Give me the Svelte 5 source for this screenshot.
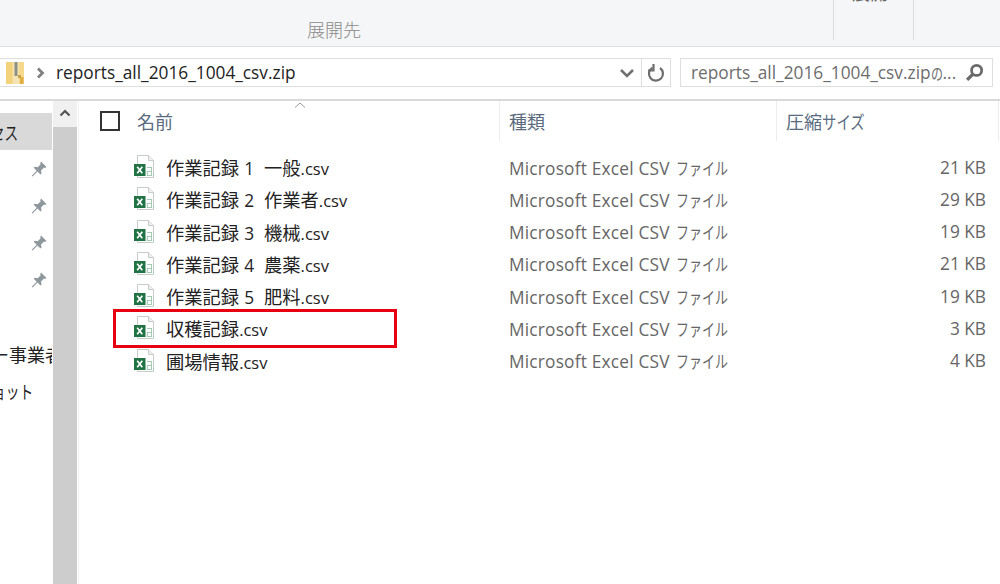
<script>
  const files = [
    { head: '作業記録', num: '1', tail: '一般', size: '21 KB' },
    { head: '作業記録', num: '2', tail: '作業者', size: '29 KB' },
    { head: '作業記録', num: '3', tail: '機械', size: '19 KB' },
    { head: '作業記録', num: '4', tail: '農薬', size: '21 KB' },
    { head: '作業記録', num: '5', tail: '肥料', size: '19 KB' },
    { head: '収穫記録', size: '3 KB' },
    { head: '圃場情報', size: '4 KB' }
  ];
  const pins = [0, 1, 2, 3];
</script>

<div class="window">
  <header class="ribbon">
    <div class="group-label">展開先</div>
    <div class="ribbon-sep first"><span class="clipped">展開</span></div>
    <div class="ribbon-sep second"></div>
  </header>

  <div class="addressbar">
    <div class="address">
      <svg class="zip" width="18" height="22" viewBox="0 0 18 22">
        <rect x="0" y="0" width="18" height="22" fill="#f6d98c" />
        <rect x="0" y="0" width="6" height="22" fill="#f3d27c" />
        <rect x="7" y="0" width="6" height="22" fill="#f4e4b4" />
        <rect x="8.500" y="0" width="3" height="14" fill="#8f8f84" />
        <rect x="14" y="15" width="3.500" height="7" fill="#dfae45" />
        <rect x="12" y="13" width="3" height="3" fill="#c9a24a" />
      </svg>
      <svg class="crumb" width="10" height="12" viewBox="0 0 10 12">
        <path d="M2 1.500 6.500 6 2 10.500" fill="none" stroke="#808080" stroke-width="2.800" />
      </svg>
      <span class="path">reports_all_2016_1004_csv.zip</span>
      <svg class="chev" width="16" height="10" viewBox="0 0 16 10">
        <path d="M2 2 8 8l6-6" fill="none" stroke="#707070" stroke-width="2.600" />
      </svg>
      <div class="refresh">
        <svg width="18" height="20" viewBox="0 0 18 20">
          <path d="M5.500 4.600A7 7 0 1 0 13 5" fill="none" stroke="#6e6e6e" stroke-width="2.200" />
          <path d="M6.500 1v6.500H1" fill="none" stroke="#6e6e6e" stroke-width="2.200" />
        </svg>
      </div>
    </div>
    <div class="search">
      <span class="search-text">reports_all_2016_1004_csv.zip<span class="narrow-no">の</span>...</span>
      <svg width="19" height="19" viewBox="0 0 18 18">
        <circle cx="11" cy="7" r="4.800" fill="none" stroke="#6a6a6a" stroke-width="2.600" />
        <path d="M7.500 10.500 2 16" stroke="#6a6a6a" stroke-width="3.200" />
      </svg>
    </div>
  </div>

  <div class="body">
    <nav class="sidebar">
      <div class="nav-item selected"><span class="squeezed">クイックアクセス</span></div>
      {#each pins as p (p)}
        <div class="pin-row">
          <svg width="16" height="16" viewBox="0 0 16 16">
            <path d="M10 0.500 15.500 6l-1.500 1-1-.5-3 3 .5 3-1 1-3-3-5 5-.8-.8 5-5-3-3 1-1 3 .5 3-3-.5-1z" fill="#8e979b" />
          </svg>
        </div>
      {/each}
      <div class="nav-item one"><span>オーナー事業者</span></div>
      <div class="nav-item two"><span class="squeezed">スクリーンショット</span></div>
    </nav>

    <div class="scrollbar">
      <div class="scroll-btn">
        <svg width="12" height="8" viewBox="0 0 12 8">
          <path d="M1.500 6.500 6 2l4.500 4.500" fill="none" stroke="#555" stroke-width="2.200" />
        </svg>
      </div>
      <div class="scroll-thumb"></div>
    </div>

    <main class="list">
      <div class="sort-caret">
        <svg width="12" height="6" viewBox="0 0 12 6">
          <path d="M1 5.500 6 1l5 4.500" fill="none" stroke="#999" stroke-width="1" />
        </svg>
      </div>
      <div class="cols head">
        <div class="col-name"><span class="check"></span><span class="h">名前</span></div>
        <div class="col-type"><span class="h">種類</span></div>
        <div class="col-size"><span class="h">圧縮<span class="kana k3">サイズ</span></span></div>
      </div>
      <div class="rows">
        {#each files as f, i (i)}
          <div class="cols row">
            <div class="col-name file">
              <svg class="xl" width="24" height="25" viewBox="0 0 24 25">
                <path d="M4.500 1.500h11l5 5v17h-16z" fill="#fff" stroke="#c6cdc9" />
                <path d="M15.500 1.500v5h5" fill="#f0f0f0" stroke="#c6cdc9" />
                <rect x="1" y="10" width="11.500" height="12" fill="#217346" />
                <path d="M4.200 12.800 9.300 19.200M9.300 12.800 4.200 19.200" stroke="#fff" stroke-width="1.700" />
                <path d="M14 13.500h4.500v8h-4.200v-4h4.200" fill="none" stroke="#a4cab4" stroke-width="1.100" />
                <path d="M20.500 20v2.500" stroke="#a4cab4" stroke-width="1" />
              </svg>
              <span class="fname">
                <span class="cjk">{f.head}</span>{#if f.num}<span class="idx">{f.num}</span><span class="cjk tail">{f.tail}</span>{/if}<span class="ext">.csv</span>
              </span>
            </div>
            <div class="col-type cell"><span class="latin">Microsoft Excel CSV</span><span class="kana k4">ファイル</span></div>
            <div class="col-size cell num">{f.size}</div>
          </div>
        {/each}
      </div>
      <div class="marker"></div>
    </main>
  </div>
</div>

<style>
  :global(body) {
    margin: 0;
    background: #fff;
  }
  .window {
    width: 1000px;
    height: 584px;
    overflow: hidden;
    display: flex;
    flex-direction: column;
    font-family: "Open Sans", "Noto Sans CJK JP", sans-serif;
    font-size: 17.300px;
    color: #222;
  }
  .ribbon {
    height: 46px;
    flex: none;
    background: #f5f6f7;
    border-bottom: 1px solid #dfe0e1;
    position: relative;
    overflow: hidden;
  }
  .group-label {
    position: absolute;
    left: 307px;
    top: 16px;
    color: #8a8a8a;
    font-size: 18px;
    line-height: 26px;
    font-family: "Noto Sans CJK JP", sans-serif;
    font-weight: 300;
  }
  .ribbon-sep {
    position: absolute;
    top: 0;
    height: 40px;
  }
  .ribbon-sep.first {
    left: 833px;
    width: 0;
    border-left: 1px solid #dcdddf;
  }
  .ribbon-sep.second {
    left: 913px;
    border-left: 1px solid #dcdddf;
  }
  .clipped {
    position: absolute;
    left: 18px;
    top: -20px;
    font-size: 18px;
    line-height: 24px;
    white-space: nowrap;
    color: #666;
    font-family: "Noto Sans CJK JP", sans-serif;
  }
  .addressbar {
    height: 54px;
    flex: none;
    box-sizing: border-box;
    border-bottom: 2px solid #d9d9d9;
    display: flex;
    align-items: flex-start;
    padding: 11px 7px 0 0;
  }
  .address {
    width: 671px;
    height: 29px;
    box-sizing: border-box;
    border: 1px solid #dedede;
    border-left: 0;
    display: flex;
    align-items: center;
    position: relative;
  }
  .zip {
    margin-left: 6px;
    flex: none;
  }
  .crumb {
    margin-left: 12px;
    flex: none;
  }
  .path {
    margin-left: 10px;
    color: #222;
    flex: 1;
  }
  .chev {
    flex: none;
    margin-right: 6px;
  }
  .refresh {
    width: 28px;
    height: 27px;
    border-left: 1px solid #dedede;
    display: flex;
    align-items: center;
    justify-content: center;
    flex: none;
  }
  .search {
    margin-left: 9px;
    flex: 1;
    height: 29px;
    box-sizing: border-box;
    border: 1px solid #dedede;
    padding: 0 8px 0 10px;
    display: flex;
    align-items: center;
    justify-content: space-between;
    color: #6d6d6d;
    white-space: nowrap;
  }
  .search-text {
    display: flex;
    align-items: center;
  }
  .narrow-no {
    display: inline-block;
    width: 12px;
    font-size: 16px;
    transform: scaleX(0.75);
    transform-origin: left center;
  }
  .body {
    flex: 1;
    min-height: 0;
    display: flex;
  }
  .sidebar {
    width: 52px;
    flex: none;
    padding-top: 12px;
    overflow: hidden;
    display: flex;
    flex-direction: column;
    background: #fff;
  }
  .nav-item {
    height: 37px;
    flex: none;
    display: flex;
    align-items: center;
    justify-content: flex-end;
    white-space: nowrap;
    font-size: 18px;
    color: #222;
    font-family: "Noto Sans CJK JP", sans-serif;
  }
  .nav-item span {
    flex: none;
  }
  .squeezed {
    display: inline-block;
    transform: scaleX(0.76);
    transform-origin: right center;
  }
  .selected {
    background: #d9d9d9;
    padding-right: 34px;
  }
  .pin-row {
    height: 37px;
    flex: none;
    display: flex;
    align-items: center;
    justify-content: flex-end;
    padding-right: 5px;
  }
  .one {
    margin-top: 37px;
  }
  .one span {
    margin-right: -11px;
  }
  .two {
    padding-right: 19px;
  }
  .scrollbar {
    width: 24px;
    margin-left: 1px;
    flex: none;
    display: flex;
    flex-direction: column;
    background: #cdcdcd;
  }
  .scroll-btn {
    height: 26px;
    background: #f0f0f0;
    display: flex;
    align-items: center;
    justify-content: center;
    padding-bottom: 3px;
    box-sizing: border-box;
  }
  .scroll-thumb {
    flex: 1;
  }
  .list {
    flex: 1;
    border-left: 1px solid #f2f2f2;
    position: relative;
    min-width: 0;
    margin-left: 1px;
  }
  .sort-caret {
    position: absolute;
    left: 215px;
    top: 1px;
    line-height: 0;
  }
  .cols {
    display: grid;
    grid-template-columns: 421px 277px 1fr;
  }
  .head {
    height: 40px;
    align-items: stretch;
  }
  .head > div {
    display: flex;
    align-items: center;
    padding-left: 9px;
    border-right: 1px solid #ececec;
    box-sizing: border-box;
  }
  .head > .col-name {
    padding-left: 21px;
  }
  .head > .col-size {
    margin-right: 1px;
  }
  .h {
    color: #5a6b80;
    font-size: 18px;
    font-family: "Noto Sans CJK JP", sans-serif;
    line-height: 26px;
    white-space: nowrap;
  }
  .check {
    width: 20px;
    height: 20px;
    border: 2px solid #333;
    box-sizing: border-box;
    margin-right: 17px;
    flex: none;
  }
  .kana {
    display: inline-block;
    font-family: "Noto Sans CJK JP", sans-serif;
    transform-origin: left center;
    white-space: nowrap;
  }
  .k4 {
    width: 52px;
    margin-left: 6px;
    font-size: 17px;
    transform: scaleX(0.765);
  }
  .k3 {
    width: 43px;
    font-size: 18px;
    transform: scaleX(0.8);
  }
  .rows {
    padding-top: 10px;
  }
  .row {
    height: 32.270px;
    align-items: center;
  }
  .file {
    display: flex;
    align-items: center;
    padding-left: 54px;
  }
  .xl {
    flex: none;
    margin-top: -1px;
  }
  .fname {
    margin-left: 9px;
    white-space: nowrap;
    color: #222;
    display: flex;
    align-items: baseline;
  }
  .cjk {
    font-size: 18.300px;
    font-family: "Noto Sans CJK JP", sans-serif;
  }
  .idx {
    margin-left: 5px;
    font-size: 17.300px;
  }
  .tail {
    margin-left: 10px;
  }
  .ext {
    font-size: 16.500px;
  }
  .cell {
    color: #666;
    padding-left: 9px;
    white-space: nowrap;
  }
  .latin {
    letter-spacing: 0.2px;
  }
  .num {
    text-align: right;
    padding-right: 14px;
    padding-left: 0;
  }
  .marker {
    position: absolute;
    left: 34px;
    top: 208px;
    width: 284px;
    height: 39px;
    box-sizing: border-box;
    border: 3px solid #e60012;
    pointer-events: none;
  }
</style>
